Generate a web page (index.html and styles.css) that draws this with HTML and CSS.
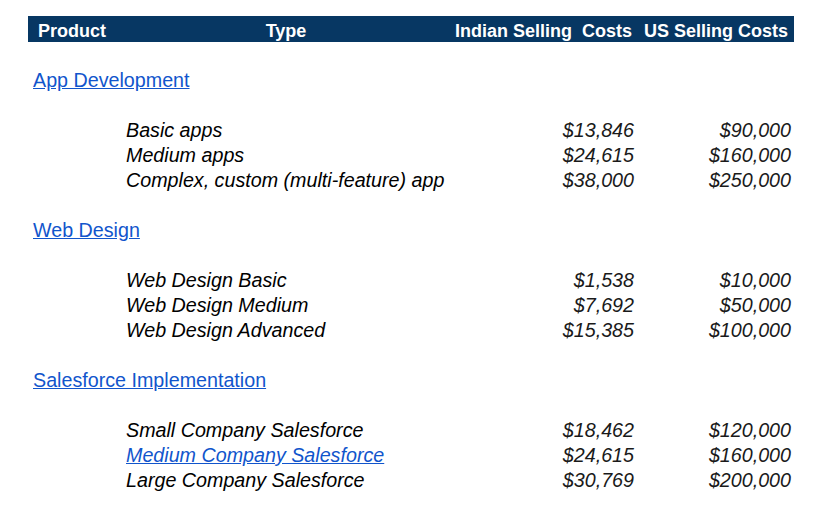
FILE: index.html
```html
<!DOCTYPE html>
<html>
<head>
<meta charset="utf-8">
<link rel="stylesheet" href="styles.css">
</head>
<body>
<table class="sheet">
  <colgroup>
    <col class="c-product">
    <col class="c-type">
    <col class="c-in">
    <col class="c-us">
  </colgroup>
  <thead>
    <tr class="head">
      <th class="h-product">Product</th>
      <th class="h-type">Type</th>
      <th class="h-num">Indian Selling  Costs</th>
      <th class="h-num h-us">US Selling Costs</th>
    </tr>
  </thead>
  <tbody>
    <tr class="row"><td colspan="4"></td></tr>
    <tr class="row"><td class="cat"><a href="#">App Development</a></td><td></td><td></td><td></td></tr>
    <tr class="row"><td colspan="4"></td></tr>
    <tr class="row"><td></td><td class="item">Basic apps</td><td class="num">$13,846</td><td class="num us">$90,000</td></tr>
    <tr class="row"><td></td><td class="item">Medium apps</td><td class="num">$24,615</td><td class="num us">$160,000</td></tr>
    <tr class="row"><td></td><td class="item">Complex, custom (multi-feature) app</td><td class="num">$38,000</td><td class="num us">$250,000</td></tr>
    <tr class="row"><td colspan="4"></td></tr>
    <tr class="row"><td class="cat"><a href="#">Web Design</a></td><td></td><td></td><td></td></tr>
    <tr class="row"><td colspan="4"></td></tr>
    <tr class="row"><td></td><td class="item">Web Design Basic</td><td class="num">$1,538</td><td class="num us">$10,000</td></tr>
    <tr class="row"><td></td><td class="item">Web Design Medium</td><td class="num">$7,692</td><td class="num us">$50,000</td></tr>
    <tr class="row"><td></td><td class="item">Web Design Advanced</td><td class="num">$15,385</td><td class="num us">$100,000</td></tr>
    <tr class="row"><td colspan="4"></td></tr>
    <tr class="row"><td class="cat"><a href="#">Salesforce Implementation</a></td><td></td><td></td><td></td></tr>
    <tr class="row"><td colspan="4"></td></tr>
    <tr class="row"><td></td><td class="item">Small Company Salesforce</td><td class="num">$18,462</td><td class="num us">$120,000</td></tr>
    <tr class="row"><td></td><td class="item"><a href="#">Medium Company Salesforce</a></td><td class="num">$24,615</td><td class="num us">$160,000</td></tr>
    <tr class="row"><td></td><td class="item">Large Company Salesforce</td><td class="num">$30,769</td><td class="num us">$200,000</td></tr>
  </tbody>
</table>
</body>
</html>
```
FILE: styles.css
```css
html, body {
  margin: 0;
  padding: 0;
  background: #ffffff;
}
body {
  font-family: "Liberation Sans", Arial, sans-serif;
}
.sheet {
  margin: 16px 0 0 28px;
  width: 766px;
  border-collapse: collapse;
  border-spacing: 0;
  table-layout: fixed;
}
.c-product { width: 92px; }
.c-type { width: 332px; }
.c-in { width: 186px; }
.c-us { width: 156px; }

.head {
  height: 26px;
  background: #073763;
  color: #ffffff;
}
.head th {
  font-size: 18px;
  font-weight: bold;
  line-height: 20px;
  padding: 0 0 1px 0;
  vertical-align: bottom;
  white-space: pre;
}
.h-product { text-align: left; padding-left: 10px !important; }
.h-type { text-align: center; padding-left: 0; }
.h-num { text-align: right; padding-right: 6px !important; }
.h-us { padding-right: 6px !important; }

.row { height: 25px; }
.row td {
  padding: 0 0 1px 0;
  font-size: 19.7px;
  line-height: 22px;
  vertical-align: bottom;
  white-space: nowrap;
  overflow: visible;
}
.cat {
  padding-left: 5px !important;
}
.cat a {
  color: #1155cc;
  text-decoration: underline;
}
.item {
  font-style: italic;
  color: #000000;
  padding-left: 6px !important;
}
.item a {
  color: #1155cc;
  text-decoration: underline;
}
.num {
  font-style: italic;
  text-align: right;
  color: #1a1a1a;
  padding-right: 4px !important;
}
.num.us {
  padding-right: 3px !important;
}
```
